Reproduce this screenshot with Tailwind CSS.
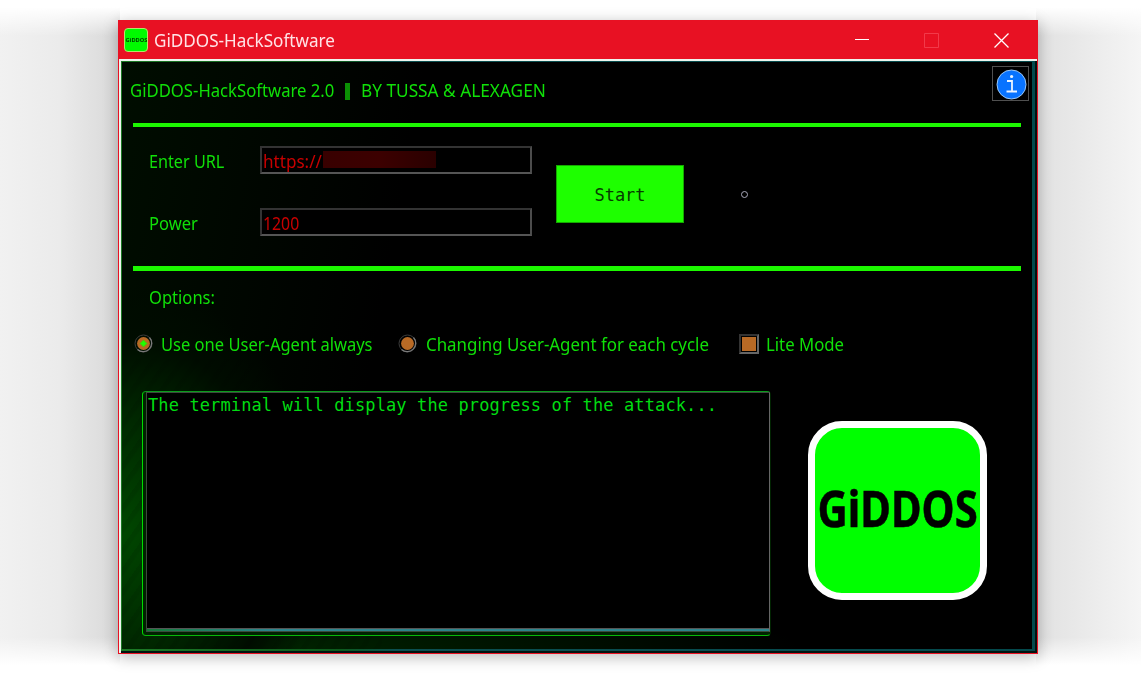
<!DOCTYPE html>
<html lang="en">
<head>
<meta charset="utf-8">
<title>GiDDOS-HackSoftware</title>
<script src="https://cdn.jsdelivr.net/npm/@tailwindcss/browser@4"></script>
</head>
<body class="relative h-[677px] w-[1141px] overflow-hidden bg-white font-['Noto_Sans',sans-serif] text-[18px] leading-6 whitespace-nowrap">

<!-- soft desktop shading on both sides of the window -->
<div class="absolute inset-0 flex justify-between">
  <div class="h-full w-[120px] bg-linear-to-r from-[#f1f1f1] via-[#ebebeb] to-[#d8d8d8]"></div>
  <div class="h-full w-[105px] bg-linear-to-r from-[#e1e1e1] via-[#ebebeb] to-[#f5f5f5]"></div>
</div>
<div class="absolute inset-x-0 top-0 h-[36px] bg-linear-to-b from-white from-20% to-white/0"></div>
<div class="absolute inset-x-0 bottom-0 h-[40px] bg-linear-to-t from-white from-30% to-white/0"></div>

<div class="relative ml-[118px] mt-[20px] flex h-[634px] w-[920px] flex-col border border-[#e81123] bg-black shadow-[0_3px_14px_rgba(0,0,0,0.28)]">
  <header class="flex h-[38px] shrink-0 items-center bg-[#e81123] pl-[5px] text-[#ffe3e6]">
    <div class="flex size-6 items-center justify-center overflow-hidden rounded-[4px] border border-[#b9e26a] bg-[#00fa00]">
      <span class="scale-x-95 text-[6px] leading-none font-bold text-[#003c00] blur-[0.4px]">GiDDOS</span>
    </div>
    <h1 class="ml-[6px] grow origin-left"><span class="inline-block origin-left scale-x-[0.95]">GiDDOS-HackSoftware</span></h1>
    <svg class="mr-[-1px] h-4 w-[14px]" viewBox="0 0 14 16"><path d="M0 7.500H14" stroke="#fff"/></svg>
    <svg class="ml-[56px] size-[15px]" viewBox="0 0 15 15" fill="none"><path d="M.5 .5h14v14H.500z" stroke="#f23a4a"/></svg>
    <svg class="ml-[55px] mr-[28px] size-[15px]" viewBox="0 0 15 15"><path d="M.5 .5l14 14M14.500 .5l-14 14" stroke="#fff" stroke-width="1.300"/></svg>
  </header>

  <div class="flex min-h-0 grow flex-col border-l-2 border-t-2 border-[#eef5ee] bg-[#001410] pb-[2px] pr-[2px]">
    <!-- themed frame: green at the left, teal at the right -->
    <div class="flex min-h-0 grow flex-col bg-[linear-gradient(90deg,#1c7a25,#0c5a1c_24%,#0b4f50_30%,#03494c)] pt-px pl-px pb-[2px] pr-[3px]">
    <main class="relative flex min-h-0 grow flex-col bg-[radial-gradient(ellipse_200px_250px_at_0px_470px,#004700,#002800_45%,#000c00_78%,#00000000),radial-gradient(ellipse_600px_70px_at_80px_590px,#002800,#00000000),linear-gradient(100deg,#000d00,#000_30%)] bg-black">
      <div class="pointer-events-none absolute bottom-0 left-0 h-[290px] w-[260px] bg-[repeating-linear-gradient(125deg,#00000014_0_4px,#00000000_6px_12px)]"></div>
      <div class="relative flex h-[61px] shrink-0 items-start pl-[8px] pt-[16px] text-[#10e008]">
        <span class="w-[215px]"><span class="inline-block origin-left scale-x-[0.927]">GiDDOS-HackSoftware 2.0</span></span>
        <span class="mt-[5px] h-[17px] w-[5px] bg-[#0b9004]"></span>
        <span class="ml-[11px] grow"><span class="inline-block origin-left scale-x-[0.958]">BY TUSSA &amp; ALEXAGEN</span></span>
        <button class="-mt-[12px] mr-[3px] flex h-[35px] w-[37px] items-center justify-center border border-[#505050] bg-black pl-px pt-px">
          <svg class="size-[31px]" viewBox="0 0 31 31" fill="none"><circle cx="15.500" cy="15.500" r="14.500" fill="#0873ff" stroke="#9cc8f5"/><path d="M11 12h5v10.500M10.500 22.500h10.500" stroke="#eaf4ff" stroke-width="1.800"/><circle cx="15.600" cy="7.500" r="1.600" fill="#eaf4ff"/></svg>
        </button>
      </div>
      <div class="relative ml-[11px] h-[4px] w-[888px] shrink-0 bg-[#1cf800]"></div>

      <form class="relative flex h-[139px] shrink-0 items-start pl-[27px] pt-[19px] text-[#10e008]">
        <div class="grid grid-cols-[111px_272px] grid-rows-[28px_28px] items-center gap-y-[34px]">
          <label class="pt-px"><span class="inline-block origin-left scale-x-[0.9]">Enter URL</span></label>
          <div class="flex h-[28px] items-center border-2 border-[#333] border-r-[#4c4c4c] border-b-[#555] bg-black pl-px text-[#c80000]"><span class="w-[60px] pt-[2px]"><span class="inline-block origin-left scale-x-[0.95]">https://</span></span><span class="h-[17px] w-[113px] -translate-y-px bg-linear-to-r from-[#380000] via-[#3c0000] to-[#2a0000]"></span></div>
          <label class="pt-px"><span class="inline-block origin-left scale-x-[0.921]">Power</span></label>
          <div class="flex h-[28px] items-center border-2 border-[#333] border-r-[#4c4c4c] border-b-[#555] bg-black pl-px text-[#c80000]"><span class="pt-px"><span class="inline-block origin-left scale-x-[0.88]">1200</span></span></div>
        </div>
        <button type="button" class="ml-[24px] mt-[19px] h-[58px] w-[128px] border border-[#15a800] bg-[#1eff00] pt-[2px] font-['DejaVu_Sans_Mono',monospace] text-[17px] text-[#063c00]">Start</button>
        <span class="ml-[57px] mt-[45px] size-[7px] rounded-full border border-[#aab]"></span>
      </form>
      <div class="relative ml-[11px] h-[5px] w-[888px] shrink-0 bg-[#1cf800]"></div>

      <section class="relative h-[120px] shrink-0 text-[#10e008]">
        <h2 class="pl-[27px] pt-[14px]"><span class="inline-block origin-left scale-x-[0.92]">Options:</span></h2>
        <div class="flex items-center pl-[12px] pt-[23px]">
          <svg class="size-[19px] -translate-y-px" viewBox="0 0 19 19" fill="none"><circle cx="9.500" cy="9.500" r="8.500" stroke="#3c3c3c"/><path d="M15.500 3.500a8.500 8.500 0 0 1-12 12" stroke="#7a7a7a" stroke-width="1.300"/><circle cx="9.500" cy="9.500" r="6.400" fill="#b96a25"/><path d="M9.500 6l3.500 3.500-3.500 3.500L6 9.500z" fill="#1eff00" stroke="#55c000" stroke-width=".8"/></svg>
          <span class="ml-[8px] w-[237px]"><span class="inline-block origin-left scale-x-[0.918]">Use one User-Agent always</span></span>
          <svg class="size-[19px] -translate-y-px" viewBox="0 0 19 19" fill="none"><circle cx="9.500" cy="9.500" r="8.500" stroke="#3c3c3c"/><path d="M15.500 3.500a8.500 8.500 0 0 1-12 12" stroke="#7a7a7a" stroke-width="1.300"/><circle cx="9.500" cy="9.500" r="6.400" fill="#b96a25"/></svg>
          <span class="ml-[9px] w-[313px]"><span class="inline-block origin-left scale-x-[0.938]">Changing User-Agent for each cycle</span></span>
          <span class="size-[20px] border-2 border-[#333] border-r-[#666] border-b-[#666] bg-black p-px"><span class="block size-full bg-[#b96a25]"></span></span>
          <span class="ml-[7px]"><span class="inline-block origin-left scale-x-[0.931]">Lite Mode</span></span>
        </div>
      </section>

      <section class="relative flex items-start pl-[20px]">
        <!-- terminal with its green halo line, fading to teal on the inside -->
        <div class="h-[245px] w-[629px] rounded-[4px] border border-t-[#0a9c1c] border-r-transparent border-b-[#08b808] border-l-[#00dc00] bg-[#002200] pl-[3px] pb-[3px]">
          <div class="h-full border border-[#3c4a3c] border-r-[#666] bg-linear-to-r from-[#157a35] to-[#2c858c] to-20% pb-[2px]">
            <div class="h-full border-b border-[#555] bg-black pl-px font-['DejaVu_Sans_Mono',monospace] text-[17px] tracking-[0.113px] text-[#00dc12]">The terminal will display the progress of the attack...</div>
          </div>
        </div>
        <div class="ml-[37px] mt-[30px] flex size-[179px] items-center justify-center rounded-[34px] border-[7px] border-white bg-[#00ff00]">
          <span class="-mt-[7px] scale-x-[0.82] text-[51px] leading-none font-bold text-black [-webkit-text-stroke:0.6px_black]">GiDDOS</span>
        </div>
      </section>
    </main>
    </div>
  </div>
</div>
</body>
</html>
